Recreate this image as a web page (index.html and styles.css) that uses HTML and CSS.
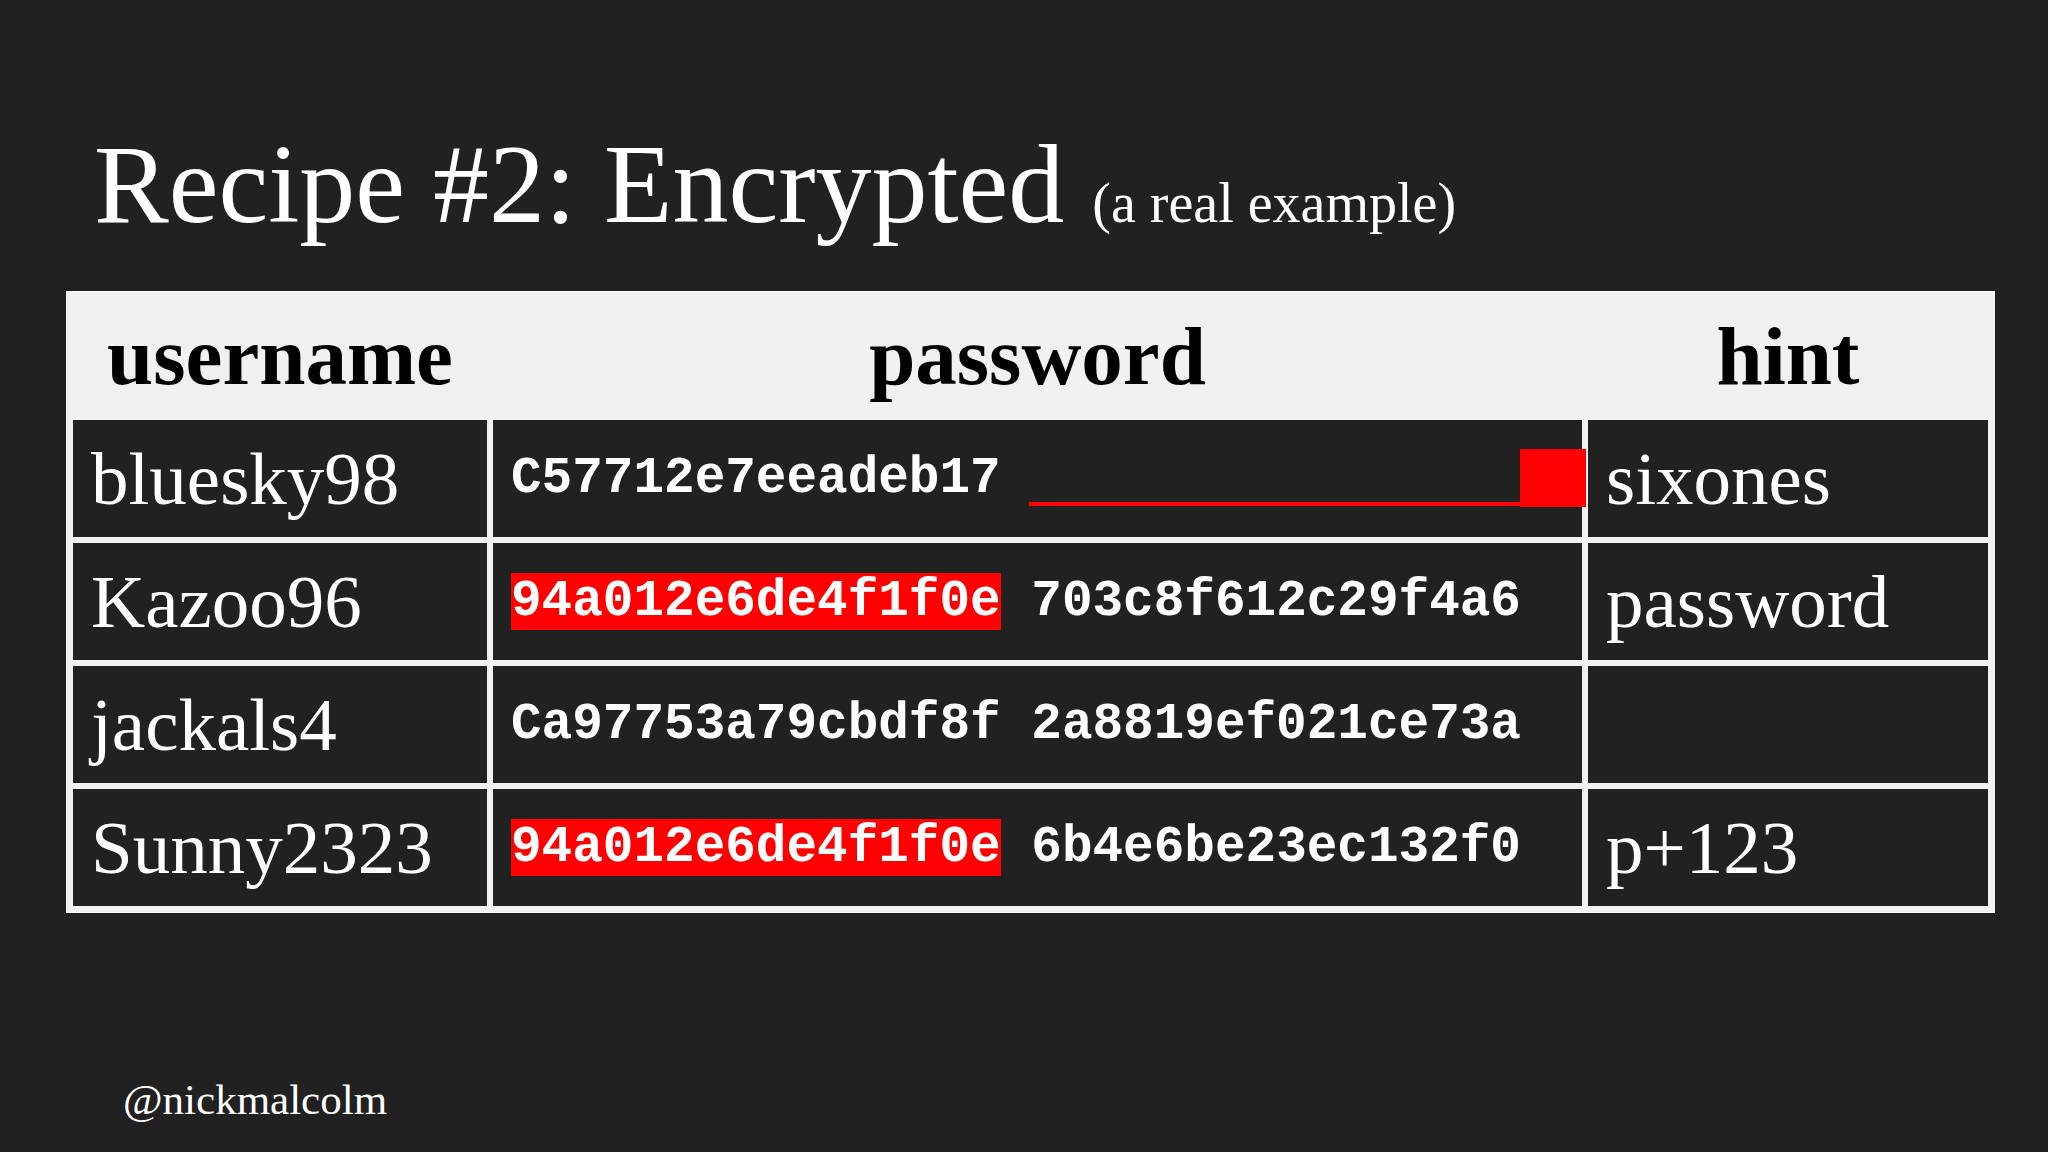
FILE: index.html
```html
<!DOCTYPE html>
<html lang="en">
<head>
<meta charset="utf-8">
<title>Recipe #2: Encrypted</title>
<link rel="stylesheet" href="styles.css">
</head>
<body>
<main class="slide">
  <h1 class="title">Recipe #2: Encrypted <span class="aside">(a real example)</span></h1>
  <table class="creds">
    <thead>
      <tr>
        <th class="col-user">username</th>
        <th class="col-pass">password</th>
        <th class="col-hint">hint</th>
      </tr>
    </thead>
    <tbody>
      <tr>
        <td class="user">bluesky98</td>
        <td class="hash marked">C57712e7eeadeb17<span class="strike-line"></span><span class="strike-block"></span></td>
        <td class="hint">sixones</td>
      </tr>
      <tr>
        <td class="user">Kazoo96</td>
        <td class="hash"><span class="hl">94a012e6de4f1f0e</span> 703c8f612c29f4a6</td>
        <td class="hint">password</td>
      </tr>
      <tr>
        <td class="user">jackals4</td>
        <td class="hash">Ca97753a79cbdf8f 2a8819ef021ce73a</td>
        <td class="hint"></td>
      </tr>
      <tr>
        <td class="user">Sunny2323</td>
        <td class="hash"><span class="hl">94a012e6de4f1f0e</span> 6b4e6be23ec132f0</td>
        <td class="hint">p+123</td>
      </tr>
    </tbody>
  </table>
  <footer class="handle">@nickmalcolm</footer>
</main>
</body>
</html>
```
FILE: styles.css
```css
html, body {
  margin: 0;
  padding: 0;
  background: #212121;
}

body {
  width: 2048px;
  height: 1152px;
  overflow: hidden;
  font-family: "Liberation Serif", "Times New Roman", serif;
  color: #ffffff;
}

.slide {
  padding: 128px 0 0 66px;
}

.title {
  margin: 0 0 51px 28px;
  font-size: 112px;
  font-weight: normal;
  line-height: 112px;
  height: 112px;
  white-space: nowrap;
}

.aside {
  font-size: 56px;
}

.creds {
  width: 1929px;
  table-layout: fixed;
  border-collapse: separate;
  border-spacing: 6px;
  border: 1px solid #fafafa;
  background: #f1f1f1;
}

.creds th {
  box-sizing: border-box;
  height: 116px;
  padding: 0;
  font-size: 83px;
  font-weight: bold;
  color: #000000;
  text-align: center;
  vertical-align: middle;
}

.col-user { width: 414px; }
.col-pass { width: 1089px; }
.col-hint { width: 400px; }

.creds td {
  box-sizing: border-box;
  height: 117px;
  padding: 0 18px;
  background: #212121;
  vertical-align: middle;
  white-space: nowrap;
}

.user, .hint {
  font-size: 75px;
}

.hash {
  font-family: "Liberation Mono", "Courier New", monospace;
  font-weight: bold;
  font-size: 51px;
  padding-left: 19px;
}

.hl {
  background: #ff0000;
}

.marked {
  position: relative;
}

.strike-line {
  position: absolute;
  left: 536px;
  top: 82px;
  width: 491px;
  height: 4px;
  background: #ff0000;
}

.strike-block {
  position: absolute;
  left: 1027px;
  top: 29px;
  width: 66px;
  height: 58px;
  background: #ff0000;
}

.handle {
  margin: 165px 0 0 57px;
  font-size: 43px;
  line-height: 43px;
}
```
